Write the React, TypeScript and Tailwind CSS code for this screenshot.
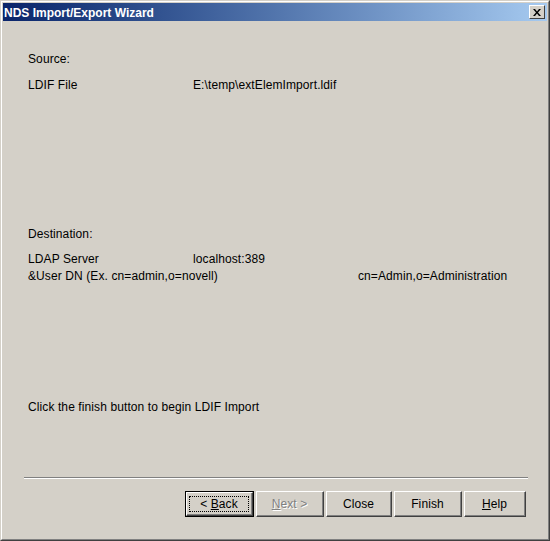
import React from "react";

const font = { fontFamily: '"Liberation Sans", Arial, sans-serif' };

function Btn({
  children,
  focused,
  disabled,
  w,
}: {
  children: React.ReactNode;
  focused?: boolean;
  disabled?: boolean;
  w: string;
}) {
  const inner = (
    <div className="w-full h-full border-t border-l border-white border-r-[#404040] border-b-[#404040] border-r border-b">
      <div className="w-full h-full border-r border-b border-[#808080] flex items-center justify-center">
        {focused ? (
          <div className="border border-dotted border-black px-[10px] leading-[14px]">{children}</div>
        ) : (
          <span
            className={
              disabled
                ? "text-[#808080] [text-shadow:1px_1px_0_#ffffff] leading-[14px]"
                : "leading-[14px]"
            }
          >
            {children}
          </span>
        )}
      </div>
    </div>
  );
  return (
    <div
      className={
        "h-[26px] text-[12px] tracking-[0.1px] text-black bg-[#d4d0c8] " +
        w +
        (focused ? " border border-black" : "")
      }
      style={font}
    >
      {inner}
    </div>
  );
}

export default function App() {
  return (
    <div className="w-[550px] h-[541px] bg-[#d4d0c8] border border-t-[#d4d0c8] border-l-[#d4d0c8] border-r-[#404040] border-b-[#404040]">
      <div className="w-full h-full border border-t-white border-l-white border-r-[#808080] border-b-[#808080] p-[1px] flex flex-col">
        <div className="h-[18px] flex items-center justify-between pl-[1px] pr-[2px] bg-gradient-to-r from-[#0a246a] to-[#a6caf0]">
          <span
            className="text-white font-bold text-[12px] leading-[14px] pt-[1px]"
            style={font}
          >
            NDS Import/Export Wizard
          </span>
          <div className="w-[16px] h-[14px] bg-[#d4d0c8] border-t border-l border-white border-r border-b border-r-[#404040] border-b-[#404040] flex items-center justify-center">
            <svg width="8" height="7" viewBox="0 0 8 7">
              <path d="M0 0h2l2 2.5L6 0h2L5 3.5 8 7H6L4 4.5 2 7H0l3-3.5z" fill="#000" />
            </svg>
          </div>
        </div>
        <div className="flex-1 flex flex-col text-[12px] tracking-[0.1px] text-black" style={font}>
          <div className="pl-[25px] leading-[17px]">
            <div className="mt-[30px]">Source:</div>
            <div className="mt-[9px] flex">
              <span className="w-[165px]">LDIF File</span>
              <span>E:\temp\extElemImport.ldif</span>
            </div>
            <div className="mt-[132px]">Destination:</div>
            <div className="mt-[8px] flex">
              <span className="w-[165px]">LDAP Server</span>
              <span>localhost:389</span>
            </div>
            <div className="flex">
              <span className="w-[330px]">&amp;User DN (Ex. cn=admin,o=novell)</span>
              <span>cn=Admin,o=Administration</span>
            </div>
            <div className="mt-[114px]">Click the finish button to begin LDIF Import</div>
          </div>
          <div className="mt-[61px] ml-[21px] mr-[19px] border-t border-[#808080] border-b border-b-white" />
          <div className="mt-[12px] flex justify-end gap-[2px] pr-[21px]">
            <Btn focused w="w-[69px]">
              &lt; <u>B</u>ack
            </Btn>
            <Btn disabled w="w-[68px]">
              <u>N</u>ext &gt;
            </Btn>
            <Btn w="w-[66px]">Close</Btn>
            <Btn w="w-[68px]">Finish</Btn>
            <Btn w="w-[62px]">
              <u>H</u>elp
            </Btn>
          </div>
        </div>
      </div>
    </div>
  );
}
